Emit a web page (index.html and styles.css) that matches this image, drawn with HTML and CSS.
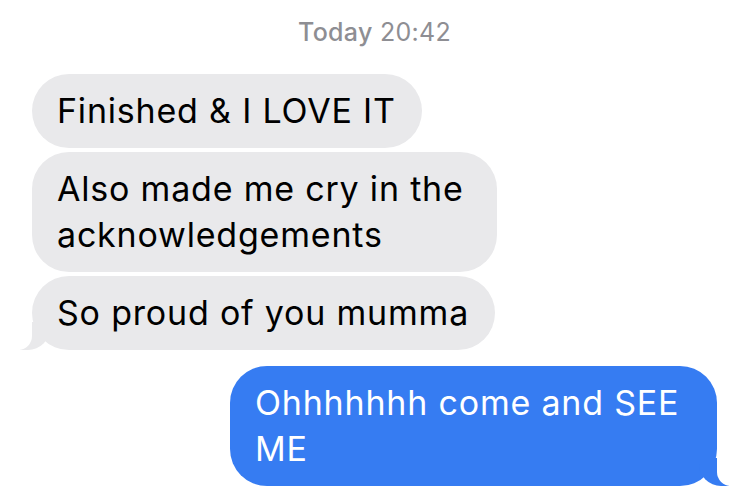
FILE: index.html
```html
<!DOCTYPE html>
<html lang="en">
<head>
    <meta charset="UTF-8">
    <meta name="viewport" content="width=device-width, initial-scale=1.0">
    <title>Messages</title>
    <link rel="stylesheet" href="styles.css">
</head>
<body>

<div class="thread">
    <p class="timestamp"><span class="day">Today</span> 20:42</p>

    <div class="group them">
        <div class="bubble">Finished &amp; I LOVE IT</div>
        <div class="bubble">Also made me cry in the acknowledgements</div>
        <div class="bubble tail">So proud of you mumma</div>
    </div>

    <div class="group me">
        <div class="bubble tail">Ohhhhhhh come and SEE ME</div>
    </div>
</div>

</body>
</html>
```

FILE: styles.css
```css
body {
    font-family: 'Inter', 'Liberation Sans', sans-serif;
    background-color: #fff;
    margin: 0;
}

.thread {
    display: flex;
    flex-direction: column;
    padding: 17px 33px 0 32px;
}

.timestamp {
    margin: 0 0 27px;
    text-align: center;
    font-size: 25px;
    line-height: 30px;
    letter-spacing: 0.3px;
    color: #8e8e93;
}

.day {
    font-weight: 500;
}

.group {
    display: flex;
    flex-direction: column;
    gap: 4px;
}

.group.them {
    align-items: flex-start;
}

.group.me {
    align-items: flex-end;
    margin-top: 16px;
}

.bubble {
    position: relative;
    padding: 14px 26px 14px 25px;
    font-size: 34px;
    line-height: 46px;
    letter-spacing: 0.8px;
    border-radius: 37px;
}

.them .bubble {
    max-width: 465px;
    box-sizing: border-box;
    background-color: #e9e9eb;
    color: #000;
}

.me .bubble {
    max-width: 487px;
    box-sizing: border-box;
    background-color: #367cf2;
    color: #fff;
}

/* little tail on the last bubble of a group */
.bubble.tail::before,
.bubble.tail::after {
    content: "";
    position: absolute;
    bottom: 0;
    height: 28px;
}

.them .bubble.tail::before {
    left: -12px;
    width: 30px;
    background-color: #e9e9eb;
    border-bottom-right-radius: 22px;
}

.them .bubble.tail::after {
    left: -30px;
    width: 30px;
    background-color: #fff;
    border-bottom-right-radius: 14px;
}

.me .bubble.tail::before {
    right: -12px;
    width: 30px;
    background-color: #367cf2;
    border-bottom-left-radius: 22px;
}

.me .bubble.tail::after {
    right: -30px;
    width: 30px;
    background-color: #fff;
    border-bottom-left-radius: 14px;
}
```
